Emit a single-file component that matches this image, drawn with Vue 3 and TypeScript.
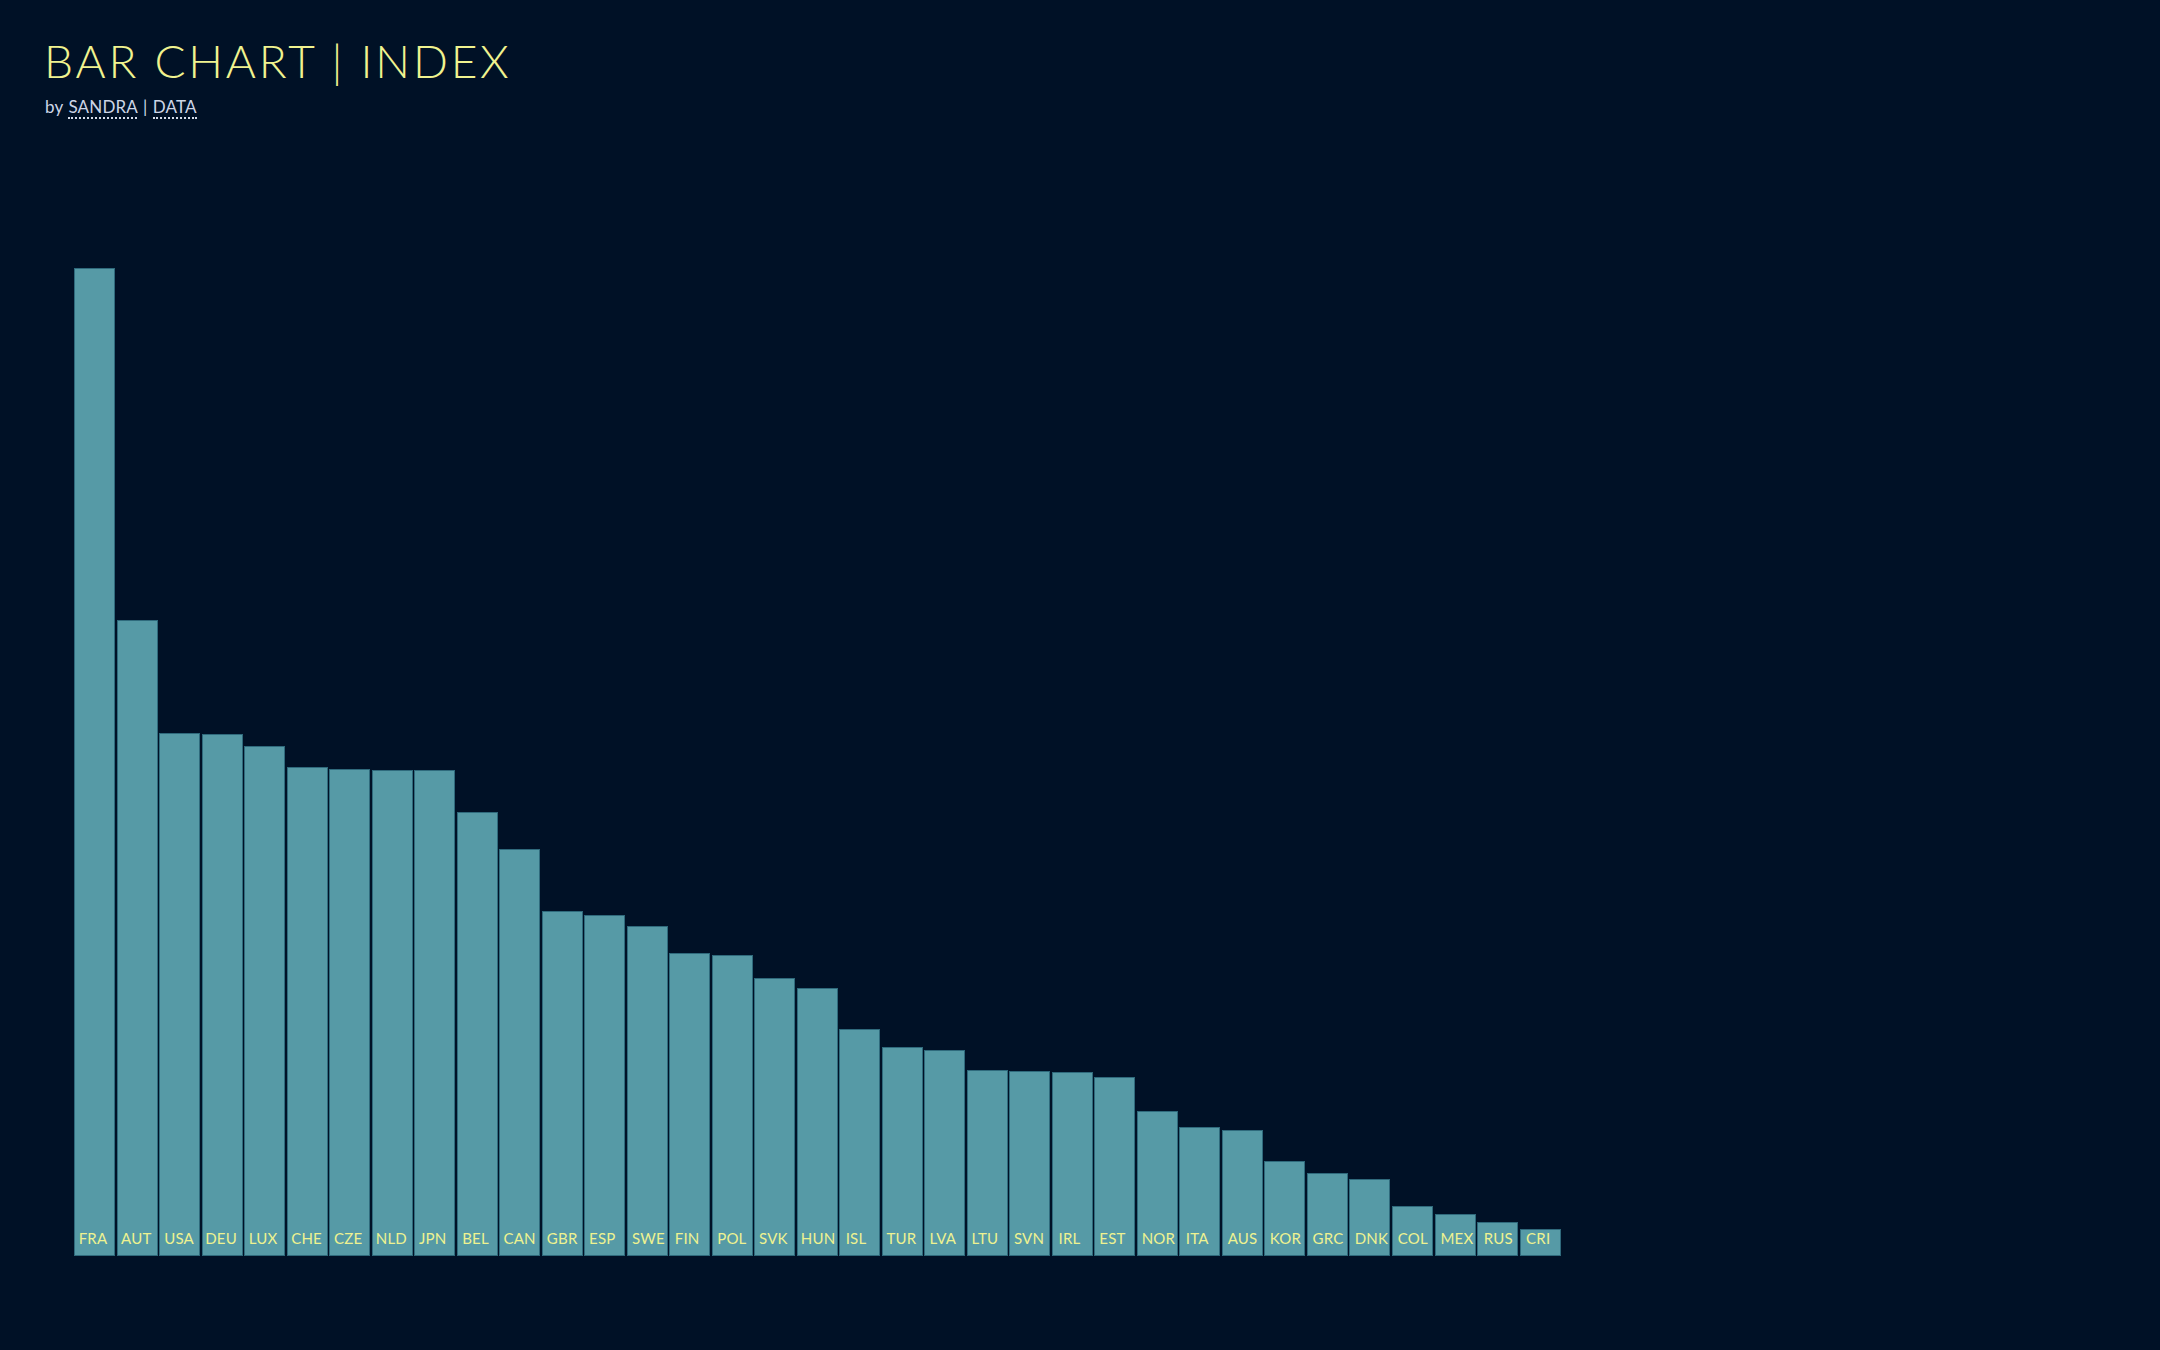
<script setup lang="ts">
interface Row {
  code: string
  top: number
  shift: number
}

const bottom = 1256
const raw: [string, number, number][] = [
  ['FRA', 268, -1.5], ['AUT', 620, -0.7], ['USA', 732.5, -0.5], ['DEU', 734, -1], ['LUX', 746, -1.4],
  ['CHE', 767, -0.5], ['CZE', 769, -1.5], ['NLD', 769.5, -0.8], ['JPN', 769.5, -1.9], ['BEL', 812, -1.6],
  ['CAN', 849, 0], ['GBR', 910.5, 0], ['ESP', 915, -2.4], ['SWE', 926, 1.2], ['FIN', 953, -2.6],
  ['POL', 954.5, -0.4], ['SVK', 978, -1.4], ['HUN', 988, 0.8], ['ISL', 1029, -3.8], ['TUR', 1047, -0.8],
  ['LVA', 1050, -2], ['LTU', 1070, -2.4], ['SVN', 1071, -0.8], ['IRL', 1072, -2.8], ['EST', 1076.5, -2.4],
  ['NOR', 1111, 1], ['ITA', 1127, -2.8], ['AUS', 1130, 0.1], ['KOR', 1161, 0.4], ['GRC', 1172.5, 0.6],
  ['DNK', 1179, 1.5], ['COL', 1206, 0.3], ['MEX', 1213.5, 1.9], ['RUS', 1221.5, 0.8], ['CRI', 1229, -1.8],
]
const rows: Row[] = raw.map(([code, top, shift]) => ({ code, top, shift }))
</script>

<template>
  <main class="page">
    <header class="head">
      <h1 class="title">BAR CHART | INDEX</h1>
      <p class="byline">
        by <a class="link" href="#">SANDRA</a> | <a class="link" href="#">DATA</a>
      </p>
    </header>
    <section class="chart">
      <div
        v-for="r in rows"
        :key="r.code"
        class="bar"
        :style="{ height: bottom - r.top + 'px' }"
      >
        <span class="label" :style="{ transform: `translateX(${r.shift}px)` }">{{ r.code }}</span>
      </div>
    </section>
  </main>
</template>

<style>
html, body { margin: 0; background: #001126; }
</style>

<style scoped>
.page {
  width: 2160px;
  height: 1350px;
  box-sizing: border-box;
  background: #001126;
  overflow: hidden;
  font-family: Lato, "Open Sans", sans-serif;
}
.head {
  height: 268px;
  box-sizing: border-box;
  padding: 34px 0 0 45px;
}
.title {
  margin: 0 0 0 -1px;
  font-size: 46px;
  line-height: 54px;
  font-weight: 300;
  letter-spacing: 2.8px;
  color: #f0f38f;
  white-space: nowrap;
}
.byline {
  margin: 9px 0 0;
  font-size: 17px;
  line-height: 20px;
  font-weight: 400;
  letter-spacing: 0.15px;
  word-spacing: 1px;
  color: #cdd6e6;
}
.link {
  color: inherit;
  text-decoration: none;
  border-bottom: 2px dotted #d5dcea;
}
.chart {
  margin-left: 74px;
  width: 1486.5px;
  height: 988px;
  display: flex;
  align-items: flex-end;
  gap: 1.5px;
}
.bar {
  flex: 1 1 0;
  box-sizing: border-box;
  background: #569aa6;
  border: 1px solid #2f6a7c;
  display: flex;
  align-items: flex-end;
  justify-content: center;
  padding-bottom: 8px;
}
.label {
  font-size: 15px;
  line-height: 18px;
  letter-spacing: 0.2px;
  color: #eef290;
  white-space: nowrap;
}
</style>
